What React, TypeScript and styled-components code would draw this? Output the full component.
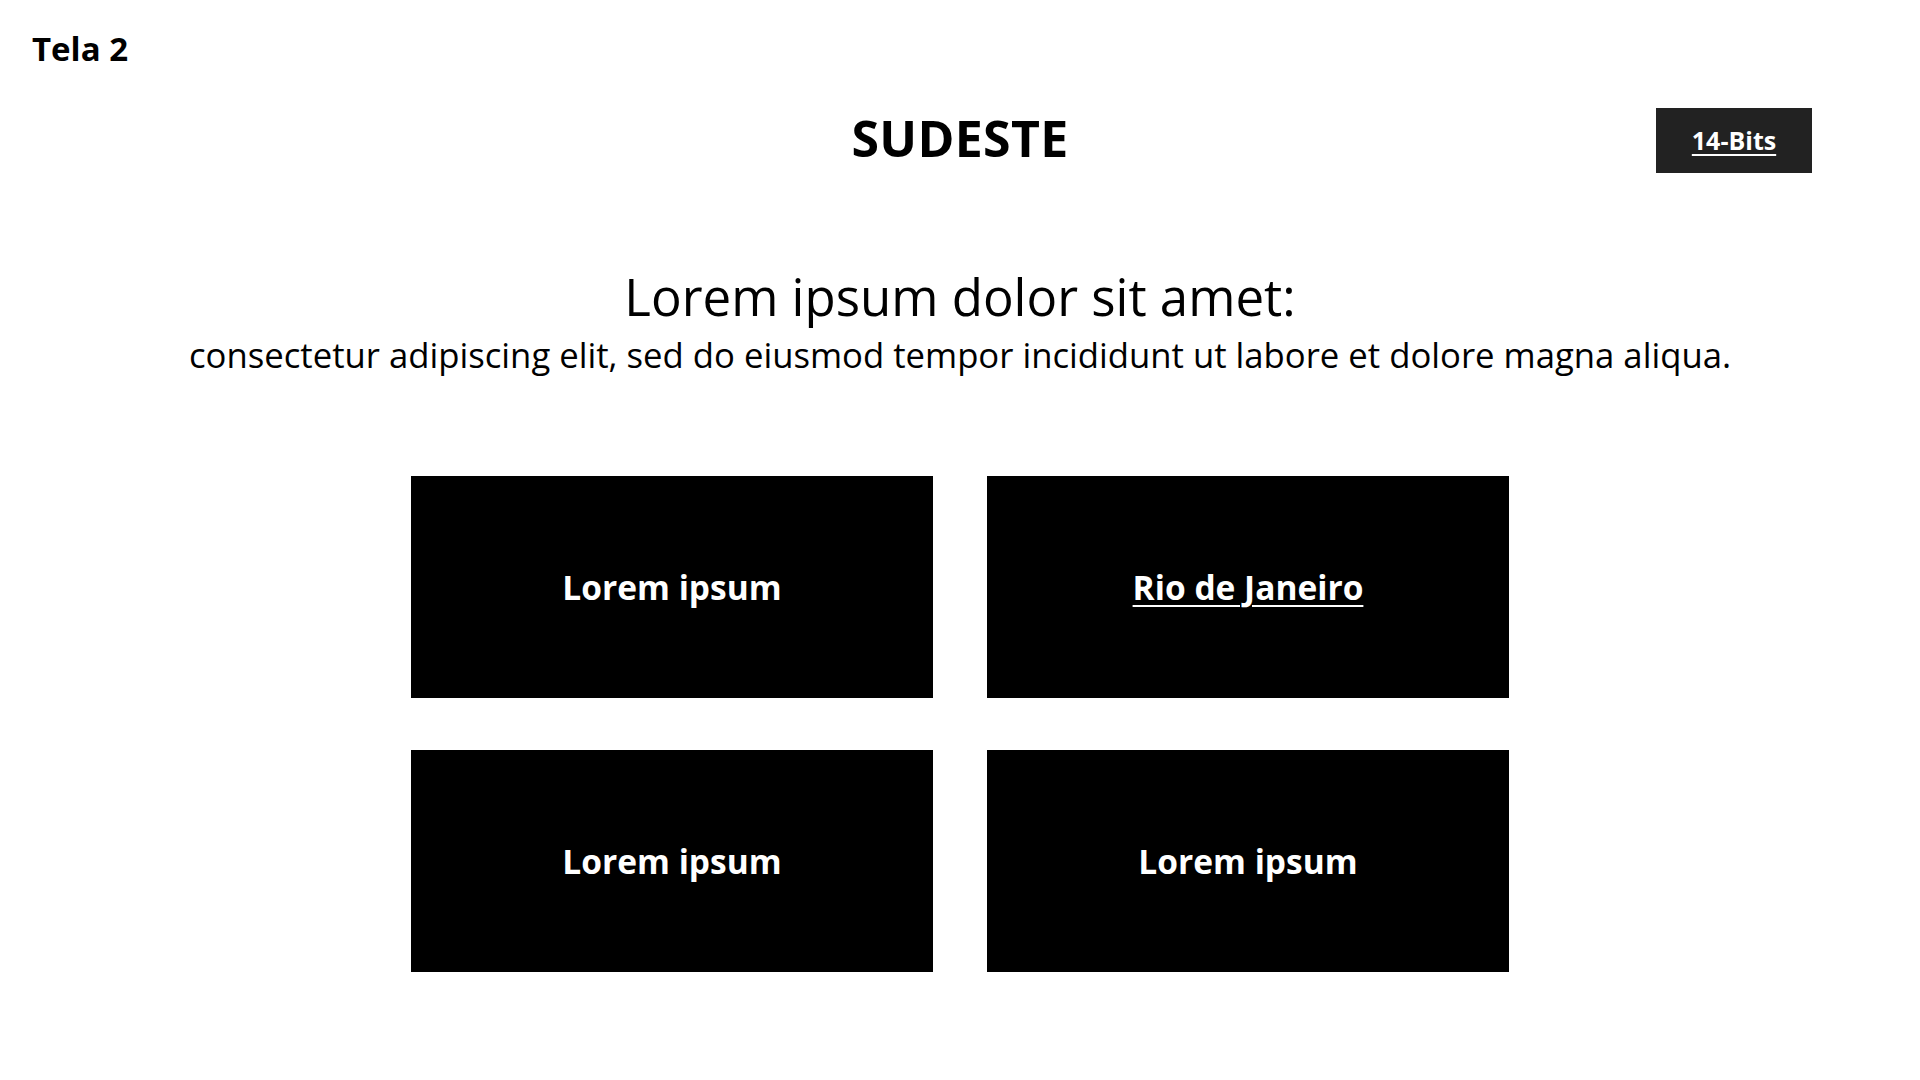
import React from "react";
import styled, { createGlobalStyle } from "styled-components";

const GlobalStyle = createGlobalStyle`
  html, body {
    margin: 0;
    padding: 0;
    background: #ffffff;
  }
  body {
    font-family: "Open Sans", "Noto Sans", sans-serif;
    color: #000000;
  }
`;

const Page = styled.div`
  width: 1920px;
  min-height: 1080px;
  display: flex;
  flex-direction: column;
  box-sizing: border-box;
`;

const ScreenLabel = styled.div`
  font-size: 33px;
  font-weight: 700;
  line-height: 41px;
  padding: 28px 0 0 32px;
`;

const Header = styled.header`
  display: grid;
  grid-template-columns: 1fr auto 1fr;
  align-items: center;
  margin-top: 39px;
  height: 65px;
`;

const RegionTitle = styled.h1`
  grid-column: 2;
  margin: 0 0 5px 0;
  font-size: 50px;
  font-weight: 700;
  line-height: 60px;
  letter-spacing: 0.3px;
`;

const TagButton = styled.a`
  grid-column: 3;
  justify-self: end;
  margin-right: 108px;
  width: 156px;
  height: 65px;
  padding-bottom: 2px;
  box-sizing: border-box;
  background: #222222;
  color: #ffffff;
  display: flex;
  align-items: center;
  justify-content: center;
  font-size: 25px;
  font-weight: 700;
  text-decoration: underline;
  text-decoration-thickness: 2px;
  text-underline-offset: 4px;
  cursor: pointer;
`;

const Intro = styled.section`
  display: flex;
  flex-direction: column;
  align-items: center;
  margin-top: 93px;
`;

const IntroHeading = styled.h2`
  margin: 0;
  font-size: 51px;
  font-weight: 400;
  line-height: 60px;
`;

const IntroText = styled.p`
  margin: 5px 0 0 0;
  font-size: 34.7px;
  font-weight: 400;
  line-height: 48px;
`;

const CardGrid = styled.div`
  display: grid;
  grid-template-columns: 522px 522px;
  grid-auto-rows: 222px;
  column-gap: 54px;
  row-gap: 52px;
  justify-content: center;
  margin-top: 97px;
`;

const Card = styled.div<{ $link?: boolean }>`
  background: #000000;
  color: #ffffff;
  display: flex;
  align-items: center;
  justify-content: center;
  font-size: 33.5px;
  font-weight: 700;
  text-decoration: ${(p) => (p.$link ? "underline" : "none")};
  text-decoration-thickness: 2px;
  text-underline-offset: 5px;
  cursor: ${(p) => (p.$link ? "pointer" : "default")};
`;

const cards = [
  { label: "Lorem ipsum", link: false },
  { label: "Rio de Janeiro", link: true },
  { label: "Lorem ipsum", link: false },
  { label: "Lorem ipsum", link: false },
];

export default function App() {
  return (
    <>
      <GlobalStyle />
      <Page>
        <ScreenLabel>Tela 2</ScreenLabel>
        <Header>
          <RegionTitle>SUDESTE</RegionTitle>
          <TagButton>14-Bits</TagButton>
        </Header>
        <Intro>
          <IntroHeading>Lorem ipsum dolor sit amet:</IntroHeading>
          <IntroText>
            consectetur adipiscing elit, sed do eiusmod tempor incididunt ut labore et dolore magna aliqua.
          </IntroText>
        </Intro>
        <CardGrid>
          {cards.map((c, i) => (
            <Card key={i} $link={c.link}>
              {c.label}
            </Card>
          ))}
        </CardGrid>
      </Page>
    </>
  );
}
